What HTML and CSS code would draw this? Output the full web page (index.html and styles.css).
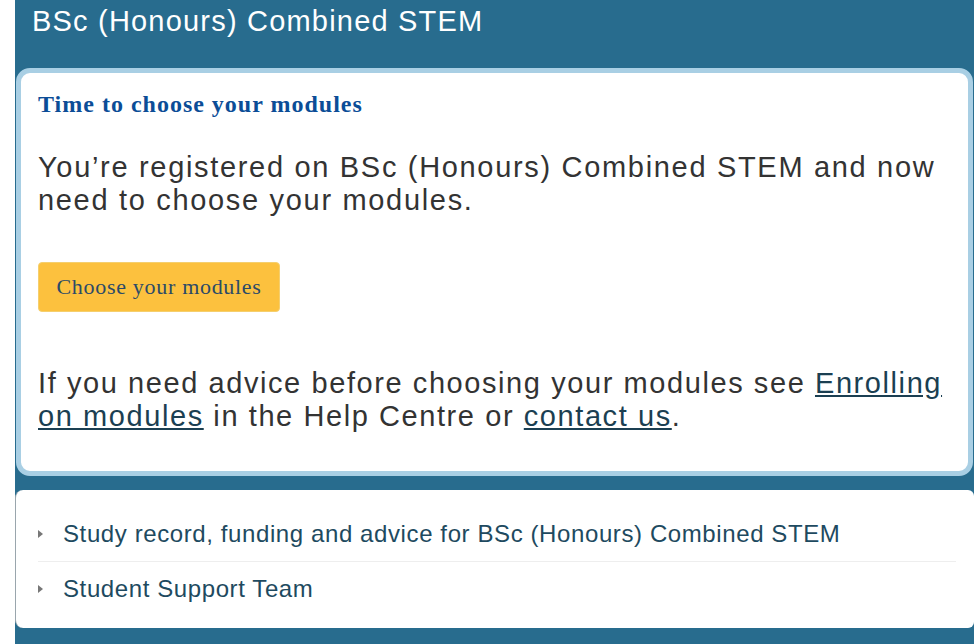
FILE: index.html
```html
<!DOCTYPE html>
<html lang="en">
<head>
  <meta charset="UTF-8">
  <title>BSc (Honours) Combined STEM</title>
  <link rel="stylesheet" href="styles.css">
</head>
<body>

  <div class="qualification">
    <h1 class="qual-title">BSc (Honours) Combined STEM</h1>

    <!-- module choice prompt -->
    <div class="choose-box">
      <h2>Time to choose your modules</h2>
      <p class="lead">You’re registered on BSc (Honours) Combined STEM and now<br>need to choose your modules.</p>
      <button class="btn-choose">Choose your modules</button>
      <p class="lead advice">If you need advice before choosing your modules see <a href="#">Enrolling<br>on modules</a> in the Help Centre or <a href="#">contact us</a>.</p>
    </div>

    <!-- collapsed sections -->
    <div class="sections">
      <div class="section-row">Study record, funding and advice for BSc (Honours) Combined STEM</div>
      <div class="section-row">Student Support Team</div>
    </div>
  </div>

</body>
</html>
```

FILE: styles.css
```css
body {
  margin: 0;
  background: #fff;
  font-family: "Liberation Sans", Arial, sans-serif;
  overflow: hidden;
}

.qualification {
  margin-left: 15px;
  background-color: #286c8e;
  border-bottom-left-radius: 10px;
  padding-bottom: 30px;
}

.qual-title {
  margin: 0;
  height: 68px;
  padding: 5px 0 0 17px;
  box-sizing: border-box;
  font-size: 29px;
  font-weight: normal;
  letter-spacing: 1.2px;
  color: #fff;
}

.choose-box {
  margin: 0 1px 0 1px;
  background: #fff;
  border: 5px solid #a9cfe4;
  border-radius: 14px;
  padding: 18px 2px 38px 17px;
}

.choose-box h2 {
  margin: 0;
  font-family: "Liberation Serif", "Times New Roman", serif;
  font-size: 24px;
  letter-spacing: 1px;
  color: #0b4d97;
}

.lead {
  margin: 33px 0 0;
  font-size: 29px;
  line-height: 33px;
  letter-spacing: 1.68px;
  color: #333;
}

.lead a {
  color: #1b3f52;
}

.btn-choose {
  display: block;
  margin-top: 45px;
  width: 242px;
  height: 50px;
  padding: 0;
  background-color: #fcc13e;
  border: 1px solid #f5cf6e;
  border-radius: 4px;
  font-family: "Liberation Serif", "Times New Roman", serif;
  font-size: 22px;
  letter-spacing: 0.7px;
  color: #2b4a68;
  cursor: pointer;
}

.advice {
  margin-top: 55px;
  letter-spacing: 1.58px;
}

.sections {
  margin-top: 14px;
  background: #fff;
  border-left: 1px solid #9aa6ad;
  border-radius: 8px 6px 6px 8px;
  padding: 17px 18px 12px 22px;
}

.section-row {
  position: relative;
  padding: 13px 0 13px 25px;
  font-size: 24px;
  letter-spacing: 0.6px;
  color: #1e4a60;
  border-bottom: 1px solid #eee;
}

.section-row:last-child {
  border-bottom: none;
}

.section-row::before {
  content: "";
  position: absolute;
  left: 0;
  top: 23px;
  border-left: 5px solid #777;
  border-top: 4px solid transparent;
  border-bottom: 4px solid transparent;
}
```
